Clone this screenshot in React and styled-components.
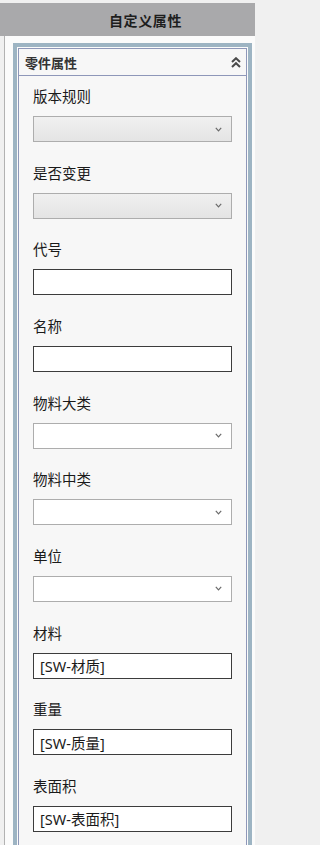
import React from "react";
import styled, { createGlobalStyle } from "styled-components";

const FONT = `"Noto Sans", "Noto Sans CJK SC", sans-serif`;

const GlobalStyle = createGlobalStyle`
  html, body {
    margin: 0;
    padding: 0;
    background: #f0f0f0;
    overflow: hidden;
  }
  body {
    font-family: ${FONT};
  }
`;

const Window = styled.div`
  width: 255px;
  height: 845px;
  padding-top: 3px;
  box-sizing: border-box;
  display: flex;
  flex-direction: column;
  background: #f0f0f0;
  overflow: hidden;
`;

const TitleBar = styled.div`
  height: 33px;
  flex: none;
  display: flex;
  align-items: center;
  justify-content: center;
  padding-left: 36px;
  background: #a9a9ab;
  color: #1e1e1e;
  font-size: 14px;
  font-weight: 700;
  letter-spacing: 0.6px;
`;

const Body = styled.div`
  flex: 1;
  margin-left: 4px;
  border-left: 1px solid #b2b2b2;
  background: #fbfbfb;
  padding: 7px 3px 0 8px;
`;

const PanelFrame = styled.div`
  border: 4px solid #9db4c3;
  padding: 1px;
  background: #fbfbfb;
`;

const Panel = styled.div`
  border: 1px solid #8e97b9;
  background: #f7f7f7;
`;

const PanelHeader = styled.div`
  height: 26px;
  display: flex;
  align-items: center;
  justify-content: space-between;
  padding: 0 5px 0 6px;
  border-bottom: 1px solid #8e97b9;
  font-size: 13px;
  font-weight: 700;
  color: #333;
`;

const PanelBody = styled.div`
  display: flex;
  flex-direction: column;
  gap: 20.67px;
  padding: 10px 14px 20px 14px;
`;

const Field = styled.div`
  display: flex;
  flex-direction: column;
`;

const Label = styled.div`
  height: 20px;
  line-height: 20px;
  margin-bottom: 10px;
  font-size: 14.5px;
  color: #1a1a1a;
`;

const SelectBox = styled.div`
  height: 26px;
  box-sizing: border-box;
  border: 1px solid #adadad;
  background: ${(p) =>
    p.disabled ? "linear-gradient(#f0f0f0, #e4e4e4)" : "#ffffff"};
  display: flex;
  align-items: center;
  justify-content: flex-end;
  padding-right: 9px;
`;

const TextBox = styled.input`
  height: 26px;
  box-sizing: border-box;
  width: 100%;
  margin: 0;
  border: 1px solid #3c3c3c;
  border-radius: 0;
  background: #fff;
  padding: 0 6px;
  font-family: ${FONT};
  font-size: 14.5px;
  color: #1a1a1a;
  outline: none;
`;

function ChevronDown() {
  return (
    <svg width="7" height="5" viewBox="0 0 7 5">
      <path d="M0.8 0.8 L3.5 3.8 L6.2 0.8" fill="none" stroke="#6a6a6a" strokeWidth="1.2" />
    </svg>
  );
}

function DoubleChevronUp() {
  return (
    <svg width="10" height="11" viewBox="0 0 10 11">
      <path d="M1 5 L5 1.2 L9 5" fill="none" stroke="#4a4a4a" strokeWidth="2" />
      <path d="M1 10 L5 6.2 L9 10" fill="none" stroke="#4a4a4a" strokeWidth="2" />
    </svg>
  );
}

const fields = [
  { label: "版本规则", kind: "select", disabled: true },
  { label: "是否变更", kind: "select", disabled: true },
  { label: "代号", kind: "text", value: "" },
  { label: "名称", kind: "text", value: "" },
  { label: "物料大类", kind: "select" },
  { label: "物料中类", kind: "select" },
  { label: "单位", kind: "select" },
  { label: "材料", kind: "text", value: "[SW-材质]" },
  { label: "重量", kind: "text", value: "[SW-质量]" },
  { label: "表面积", kind: "text", value: "[SW-表面积]" },
];

export default function App() {
  return (
    <Window>
      <GlobalStyle />
      <TitleBar>自定义属性</TitleBar>
      <Body>
        <PanelFrame>
          <Panel>
            <PanelHeader>
              <span>零件属性</span>
              <DoubleChevronUp />
            </PanelHeader>
            <PanelBody>
              {fields.map((f) => (
                <Field key={f.label}>
                  <Label>{f.label}</Label>
                  {f.kind === "select" ? (
                    <SelectBox disabled={f.disabled}>
                      <ChevronDown />
                    </SelectBox>
                  ) : (
                    <TextBox value={f.value} readOnly />
                  )}
                </Field>
              ))}
            </PanelBody>
          </Panel>
        </PanelFrame>
      </Body>
    </Window>
  );
}
